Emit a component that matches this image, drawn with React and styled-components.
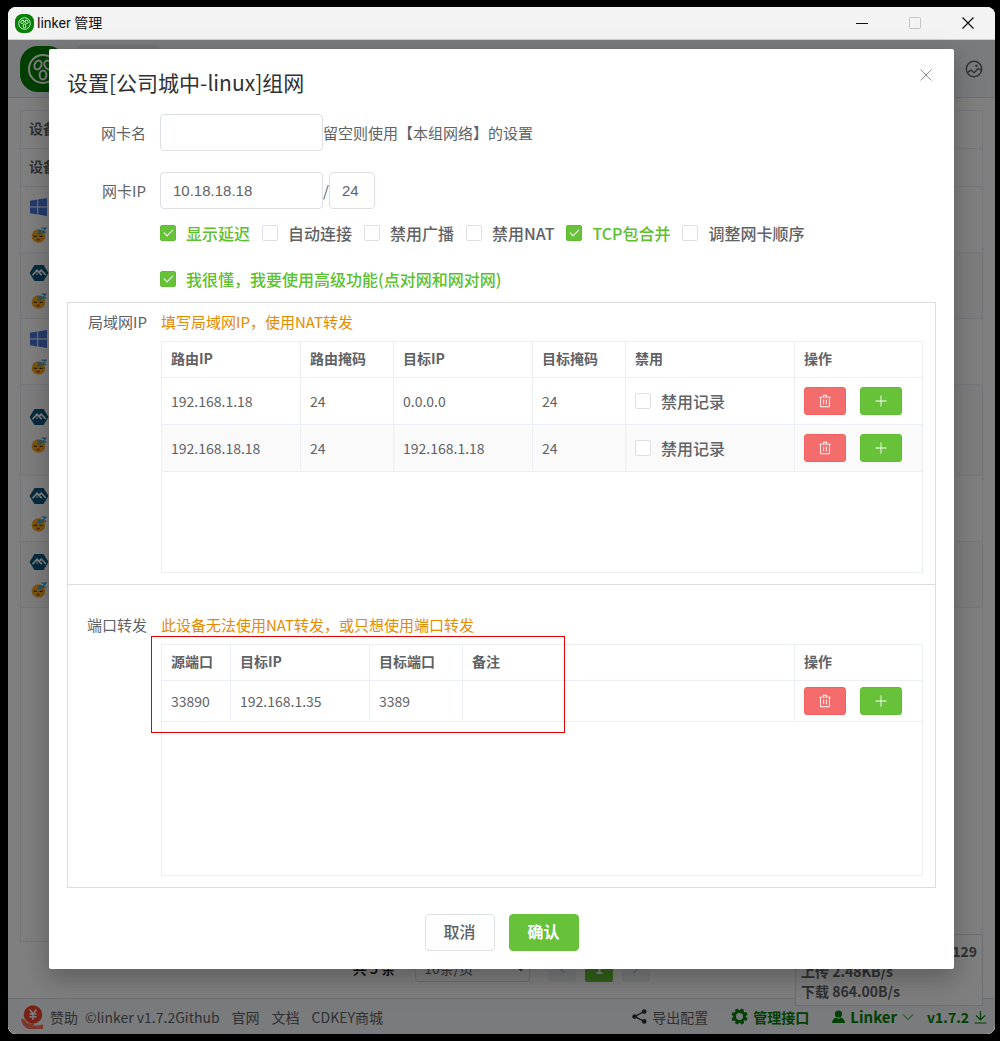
import React from "react";
import styled, { createGlobalStyle, css } from "styled-components";

const GlobalStyle = createGlobalStyle`
  *, *::before, *::after { box-sizing: border-box; }
  body {
    margin: 0;
    background: #000;
    color: #606266;
    font-family: "Noto Sans CJK SC", sans-serif;
    font-size: 14px;
    line-height: 20px;
  }
  button, input, select { font: inherit; color: inherit; margin: 0; }
`;

/* ---------- window frame ---------- */

const Desktop = styled.div`
  display: flex;
  min-height: 100vh;
  padding: 7px 5px 7px 8px;
`;

const AppWindow = styled.div`
  flex: 1;
  min-width: 0;
  display: flex;
  flex-direction: column;
  border-radius: 8px;
  overflow: hidden;
  background: #fff;
`;

const TitleBar = styled.header`
  display: flex;
  align-items: center;
  height: 33px;
  padding: 0 1px 0 7px;
  background: #f3f3f3;
  border-bottom: 1px solid #d0d0d0;
`;

const WindowTitle = styled.span`
  flex: 1;
  padding-left: 3px;
  color: #111;
  font-family: Roboto, "Noto Sans CJK SC", sans-serif;
`;

const WindowButton = styled.button`
  display: grid;
  place-items: center;
  width: 53px;
  height: 32px;
  padding: 0;
  border: 0;
  background: none;
  color: #111;
  &:disabled { color: #c4c4c4; }
`;

const Stage = styled.div`
  flex: 1;
  display: grid;
  grid-template-columns: minmax(0, 1fr);
  > * { grid-area: 1 / 1; }
`;

/* ---------- page behind the dialog ---------- */

const Page = styled.div`
  position: relative;
  display: flex;
  flex-direction: column;
  background: #fff;
`;

const PageHeader = styled.div`
  display: flex;
  align-items: center;
  gap: 12px;
  height: 58px;
  padding: 0 12px;
  background: #f5f7fa;
  border-bottom: 1px solid #dcdfe6;
`;

const NavTab = styled.a`
  align-self: stretch;
  width: 81px;
  margin: 5px auto 5px 0;
  border-radius: 4px;
  background: #e6e8eb;
`;

const IconButton = styled.button`
  display: grid;
  place-items: center;
  padding: 0;
  border: 0;
  background: none;
  color: #606266;
`;

const PageMain = styled.main`
  flex: 1;
  display: flex;
  flex-direction: column;
  gap: 12px;
  padding: 12px 12px 16px;
`;

const DeviceBox = styled.div`
  flex: 1;
  border: 1px solid #ebeef5;
`;

const DeviceTable = styled.table`
  width: 100%;
  border-spacing: 0;
  th, td { border-bottom: 1px solid #ebeef5; padding: 0 8px; text-align: left; }
  th { height: 38px; padding-bottom: 4px; color: #606266; font-weight: 700; }
`;

const DeviceRow = styled.tr`
  height: ${(p) => (p.$tall ? 91 : 66)}px;
  background: ${(p) => (p.$striped ? "#fafafa" : "#fff")};
`;

const DeviceIcons = styled.div`
  display: flex;
  flex-direction: column;
  align-items: center;
  gap: 10px;
  width: 20px;
`;

const Pager = styled.nav`
  display: flex;
  justify-content: center;
  align-items: center;
  gap: 9px;
  height: 28px;
`;

const PagerTotal = styled.span`
  margin-right: 11px;
  color: #000;
  font-weight: 500;
`;

const PagerSize = styled.select`
  width: 115px;
  height: 28px;
  margin-right: 9px;
  padding: 0 4px;
  border: 1px solid #dcdfe6;
  border-radius: 4px;
  background: #fff;
`;

const PagerButton = styled.button`
  display: grid;
  place-items: center;
  width: 28px;
  height: 28px;
  padding: 0;
  border: 0;
  border-radius: 2px;
  background: ${(p) => (p.$active ? "#67c23a" : "#f0f2f5")};
  color: ${(p) => (p.$active ? "#fff" : "#a8abb2")};
  font-weight: 700;
`;

const Traffic = styled.div`
  position: absolute;
  right: 12px;
  bottom: 28px;
  width: 188px;
  padding: 6px 5px 4px;
  border: 1px solid #dcdfe6;
  background: #fff;
  font-weight: 700;
  p { margin: 0; }
  p:first-child { text-align: right; }
`;

const PageFooter = styled.footer`
  display: flex;
  align-items: center;
  justify-content: space-between;
  height: 36px;
  padding: 0 8px 0 13px;
  background: #f5f7fa;
  border-top: 1px solid #dcdfe6;
`;

const FooterSide = styled.div`
  display: flex;
  align-items: center;
  gap: ${(p) => p.$gap}px;
`;

const FooterLink = styled.a`
  display: inline-flex;
  align-items: center;
  gap: ${(p) => p.$gap || 5}px;
  color: inherit;
  text-decoration: none;
  ${(p) =>
    p.$green &&
    css`
      color: #008000;
      font-size: ${p.$large ? 15 : 14}px;
      font-weight: 700;
    `}
`;

/* ---------- dialog ---------- */

const Overlay = styled.div`
  position: relative;
  padding: 9px 41px 65px;
  background: rgba(0, 0, 0, 0.5);
`;

const Dialog = styled.section`
  position: relative;
  padding: 18px;
  border-radius: 2px;
  background: #fff;
  box-shadow: 0 12px 32px 4px rgba(0, 0, 0, 0.1), 0 8px 20px rgba(0, 0, 0, 0.16);
`;

const DialogTitle = styled.h1`
  margin: 0 0 17px;
  color: #303133;
  font-size: 21px;
  font-weight: 400;
  line-height: 30px;
`;

const DialogClose = styled(IconButton)`
  position: absolute;
  top: 16px;
  right: 18px;
  width: 20px;
  height: 20px;
  color: #909399;
`;

const FormRow = styled.div`
  display: flex;
  align-items: center;
  margin-bottom: 21px;
  font-size: 15px;
`;

const RowLabel = styled.label`
  flex: none;
  width: 93px;
  padding-right: 14px;
  text-align: right;
  font-size: 15px;
  line-height: 22px;
`;

const TextInput = styled.input`
  width: ${(p) => (p.$short ? 46 : 163)}px;
  height: 37px;
  padding: 0 12px;
  border: 1px solid #dcdfe6;
  border-radius: 4px;
  background: #fff;
  font-family: "Liberation Sans", sans-serif;
  font-size: 15px;
`;

const Slash = styled.span`
  width: 6px;
`;

const Options = styled.div`
  display: flex;
  flex-direction: column;
  gap: 9px;
  margin: -16px 0 5px;
  padding-left: 93px;
`;

const OptionLine = styled.div`
  display: flex;
  align-items: center;
  gap: 12px;
  height: 37px;
`;

const CheckLabel = styled.label`
  display: inline-flex;
  align-items: center;
  gap: 10px;
  font-size: 16px;
  font-weight: 500;
  line-height: 24px;
  white-space: nowrap;
`;

const CheckBox = styled.input.attrs({ type: "checkbox" })`
  appearance: none;
  display: grid;
  place-content: center;
  width: 16px;
  height: 16px;
  border: 1px solid #dcdfe6;
  border-radius: 2px;
  background: #fff;
  &:checked {
    border-color: #5fbd32;
    background: #67c23a;
  }
  &:checked::after {
    content: "";
    width: 9px;
    height: 5px;
    margin-bottom: 3px;
    border: solid #fff;
    border-width: 0 0 1px 1px;
    transform: rotate(-45deg);
  }
  &:checked + span { color: #5dc02e; }
`;

const Group = styled.div`
  display: flex;
  padding: ${(p) => (p.$spaced ? "29px 12px 11px 0" : "8px 12px 11px 0")};
  border: 1px solid #ddd;
  & + & { border-top: 0; }
`;

const GroupBody = styled.div`
  flex: 1;
  min-width: 0;
`;

const Hint = styled.div`
  margin-bottom: 8px;
  color: #e68a00;
  font-size: 15px;
  line-height: 22px;
`;

const TableBox = styled.div`
  position: relative;
  min-height: 232px;
  border: 1px solid #ebeef5;
`;

const DataTable = styled.table`
  width: 100%;
  table-layout: fixed;
  border-spacing: 0;
  th, td {
    padding: 0 9px;
    border-right: 1px solid #ebeef5;
    border-bottom: 1px solid #ebeef5;
    text-align: left;
    white-space: nowrap;
  }
  th:last-child, td:last-child { border-right: 0; }
  th { height: 36px; padding-bottom: 3px; font-weight: 700; }
  td { height: ${(p) => p.$rowHeight}px; }
  tbody tr:nth-child(even) { background: #fafafa; }
`;

const Actions = styled.div`
  display: flex;
  gap: 14px;
`;

const ActionButton = styled.button`
  display: grid;
  place-items: center;
  width: 42px;
  height: 28px;
  padding: 0;
  border: 1px solid ${(p) => (p.$danger ? "#f56060" : "#5fbd32")};
  border-radius: 3px;
  background: ${(p) => (p.$danger ? "#f56c6c" : "#67c23a")};
  color: #fff;
`;

const Highlight = styled.div`
  position: absolute;
  top: -9px;
  left: -11px;
  width: 414px;
  height: 97px;
  border: 1px solid #e60000;
  pointer-events: none;
`;

const DialogFooter = styled.div`
  display: flex;
  justify-content: center;
  gap: 14px;
  margin-top: 26px;
`;

const DialogButton = styled.button`
  width: 70px;
  height: 37px;
  padding: 0 0 4px;
  border: 1px solid ${(p) => (p.$primary ? "#67c23a" : "#dcdfe6")};
  border-radius: 4px;
  background: ${(p) => (p.$primary ? "#67c23a" : "#fff")};
  color: ${(p) => (p.$primary ? "#fff" : "#606266")};
  font-size: 16px;
  font-weight: ${(p) => (p.$primary ? 700 : 500)};
`;

/* ---------- icons ---------- */

const Logo = ({ size }) => (
  <svg width={size} height={size} viewBox="0 0 46 46" aria-hidden="true">
    <rect width="46" height="46" rx="18" fill="#058005" />
    <g fill="none" stroke="#fff" strokeWidth="2">
      <circle cx="23" cy="23" r="14" />
      <ellipse cx="18" cy="19" rx="3.4" ry="4.6" transform="rotate(25 18 19)" />
      <ellipse cx="28" cy="19" rx="3.4" ry="4.6" transform="rotate(-25 28 19)" />
      <ellipse cx="23" cy="29" rx="3.4" ry="4.6" />
    </g>
  </svg>
);

const CrossIcon = ({ size, width = 1 }) => (
  <svg width={size} height={size} viewBox="0 0 12 12" fill="none" stroke="currentColor" strokeWidth={width} aria-hidden="true">
    <path d="M.5.5l11 11M11.5.5l-11 11" />
  </svg>
);

const PictureIcon = () => (
  <svg width="18" height="18" viewBox="0 0 18 18" fill="none" stroke="currentColor" strokeWidth="1.4" aria-hidden="true">
    <circle cx="9" cy="9" r="7.7" />
    <path d="M2.500 12.800L5 10.600c.7-.6 1.300-.5 1.900.1l1.200 1.200c.6.600 1.200.6 1.800 0L12.600 9c.6-.6 1.200-.6 1.800 0l2 1.800" />
    <circle cx="11.400" cy="5.800" r="1.200" fill="currentColor" stroke="none" />
  </svg>
);

const WindowsIcon = () => (
  <svg width="20" height="20" viewBox="0 0 20 20" fill="#4a78d8" aria-hidden="true">
    <path d="M1 3.800l7.300-1.200v6.900H1zM9.200 2.400L18 1v8.500H9.200zM1 10.500h7.300v6.900L1 16.200zM9.200 10.500H18V19l-8.800-1.400z" />
  </svg>
);

const AlpineIcon = () => (
  <svg width="20" height="20" viewBox="0 0 20 20" aria-hidden="true">
    <path d="M5.500 2h9L19.500 10l-5 8h-9L.5 10z" fill="#0d597f" />
    <path d="M3.500 12.200L8 7.300l4.800 4.900M10.300 9l2-1.800 4.600 4.800" fill="none" stroke="#fff" strokeWidth="1.700" />
    <path d="M8 9.500v2.500" stroke="#fff" strokeWidth="1" />
  </svg>
);

const SleepIcon = () => (
  <svg width="16" height="16" viewBox="0 0 16 16" fill="none" aria-hidden="true">
    <circle cx="7.500" cy="9" r="6.800" fill="#f7ab20" />
    <path d="M2.800 8.800c.8.900 2.200.9 3 0M8.600 8.800c.8.900 2.200.9 3 0" stroke="#5a3510" strokeWidth="1.100" />
    <ellipse cx="7.200" cy="12.600" rx="1.500" ry="1.200" fill="#b8322c" />
    <path d="M10.500 1.200h4.300l-3.600 4h4.200M6.800 3.800h2.900L7.300 6.500h3" stroke="#38a4d8" strokeWidth="1.300" />
  </svg>
);

const DeleteIcon = () => (
  <svg width="14" height="14" viewBox="0 0 1024 1024" fill="currentColor" aria-hidden="true">
    <path d="M160 256H96a32 32 0 0 1 0-64h256V95.936a32 32 0 0 1 32-32h256a32 32 0 0 1 32 32V192h256a32 32 0 1 1 0 64h-64v672a32 32 0 0 1-32 32H192a32 32 0 0 1-32-32zm448-64v-64H416v64zM224 896h576V256H224zm192-128a32 32 0 0 1-32-32V416a32 32 0 0 1 64 0v320a32 32 0 0 1-32 32m192 0a32 32 0 0 1-32-32V416a32 32 0 0 1 64 0v320a32 32 0 0 1-32 32" />
  </svg>
);

const PlusIcon = () => (
  <svg width="14" height="14" viewBox="0 0 1024 1024" fill="currentColor" aria-hidden="true">
    <path d="M480 480V128a32 32 0 0 1 64 0v352h352a32 32 0 1 1 0 64H544v352a32 32 0 1 1-64 0V544H128a32 32 0 0 1 0-64z" />
  </svg>
);

const SponsorIcon = () => (
  <svg width="22" height="24" viewBox="0 0 22 24" fill="none" aria-hidden="true">
    <circle cx="12" cy="9.500" r="9.200" fill="#f0442e" />
    <path d="M0 14c2-.6 3.400.5 4.600 2.200 1.800 2.300 4 2.600 7 2.300 2 0 2.200 1.600.4 2H9.500h8c1.500-.6 3-1.200 4.500-1V24H8.500C4 23.500 1 19.500 0 14z" fill="#f8705c" />
    <path d="M8.600 4.500l3.400 4.200 3.400-4.200M8.500 9h7M8.500 11.800h7M12 8.500v6.300" stroke="#fff" strokeWidth="1.500" />
  </svg>
);

const ShareIcon = () => (
  <svg width="15" height="15" viewBox="0 0 15 15" fill="#303133" stroke="#303133" strokeWidth="1.300" aria-hidden="true">
    <path d="M12 2.600L2.800 7.500l9.200 4.900" fill="none" />
    <circle cx="12.200" cy="2.600" r="1.700" />
    <circle cx="2.600" cy="7.500" r="1.700" />
    <circle cx="12.200" cy="12.400" r="1.700" />
  </svg>
);

const GearIcon = () => (
  <svg width="17" height="17" viewBox="0 0 18 18" fill="none" stroke="currentColor" aria-hidden="true">
    <circle cx="9" cy="9" r="5.200" strokeWidth="3" />
    {[0, 45, 90, 135, 180, 225, 270, 315].map((a) => (
      <path key={a} d="M9 .5v3" strokeWidth="3.600" transform={`rotate(${a + 22} 9 9)`} />
    ))}
  </svg>
);

const UserIcon = () => (
  <svg width="13" height="14" viewBox="0 0 13 14" fill="currentColor" aria-hidden="true">
    <circle cx="6.500" cy="4" r="3.600" />
    <path d="M4.300 7.500L6.500 9l2.200-1.500c2.800.9 4 2.500 4.300 5.500H0c.3-3 1.500-4.600 4.300-5.500z" />
  </svg>
);

const ChevronIcon = ({ direction = 0, size = 12 }) => (
  <svg width={size} height={size} viewBox="0 0 12 12" fill="none" stroke="currentColor" aria-hidden="true">
    <path d="M1 3.500l5 5 5-5" transform={`rotate(${direction} 6 6)`} />
  </svg>
);

const DownloadIcon = () => (
  <svg width="13" height="14" viewBox="0 0 13 14" fill="none" stroke="currentColor" strokeWidth="1.200" aria-hidden="true">
    <path d="M6.500 1v8.500M2 5.500l4.500 4.300L11 5.500M.5 13h12" />
  </svg>
);

/* ---------- data ---------- */

const devices = [
  { os: "windows" },
  { os: "alpine" },
  { os: "windows" },
  { os: "alpine", tall: true },
  { os: "alpine" },
  { os: "alpine" },
];

const options = [
  { label: "显示延迟", on: true },
  { label: "自动连接" },
  { label: "禁用广播" },
  { label: "禁用NAT" },
  { label: "TCP包合并", on: true },
  { label: "调整网卡顺序" },
];

const lanRows = [
  ["192.168.1.18", "24", "0.0.0.0", "24"],
  ["192.168.18.18", "24", "192.168.1.18", "24"],
];

const forwardRows = [["33890", "192.168.1.35", "3389", ""]];

const Check = ({ label, on }) => (
  <CheckLabel>
    <CheckBox defaultChecked={on} />
    <span>{label}</span>
  </CheckLabel>
);

const Columns = ({ widths }) => (
  <colgroup>
    {widths.map((w, i) => (
      <col key={i} width={w} />
    ))}
  </colgroup>
);

const HeadRow = ({ titles }) => (
  <thead>
    <tr>
      {titles.map((t) => (
        <th key={t} scope="col">{t}</th>
      ))}
    </tr>
  </thead>
);

const RowActions = () => (
  <Actions>
    <ActionButton type="button" $danger aria-label="删除"><DeleteIcon /></ActionButton>
    <ActionButton type="button" aria-label="添加"><PlusIcon /></ActionButton>
  </Actions>
);

const Background = () => (
  <Page>
    <PageHeader>
      <Logo size={46} />
      <NavTab href="#home" aria-label="首页" />
      <IconButton type="button" aria-label="背景图片"><PictureIcon /></IconButton>
    </PageHeader>
    <PageMain>
      <DeviceBox>
        <DeviceTable>
          <thead>
            <tr><th scope="col">设备</th></tr>
            <tr><th scope="col">设备</th></tr>
          </thead>
          <tbody>
            {devices.map((d, i) => (
              <DeviceRow key={i} $tall={d.tall} $striped={i % 2 === 1}>
                <td>
                  <DeviceIcons>
                    {d.os === "windows" ? <WindowsIcon /> : <AlpineIcon />}
                    <SleepIcon />
                  </DeviceIcons>
                </td>
              </DeviceRow>
            ))}
          </tbody>
        </DeviceTable>
      </DeviceBox>
      <Pager aria-label="分页">
        <PagerTotal>共 5 条</PagerTotal>
        <PagerSize aria-label="每页条数" defaultValue="10">
          <option value="10">10条/页</option>
        </PagerSize>
        <PagerButton type="button" aria-label="上一页"><ChevronIcon direction={90} /></PagerButton>
        <PagerButton type="button" $active>1</PagerButton>
        <PagerButton type="button" aria-label="下一页"><ChevronIcon direction={-90} /></PagerButton>
      </Pager>
    </PageMain>
    <PageFooter>
      <FooterSide $gap={7}>
        <FooterLink href="#sponsor" $gap={7}><SponsorIcon />赞助</FooterLink>
        <FooterSide $gap={12}>
          <FooterLink href="#github">©linker v1.7.2Github</FooterLink>
          <FooterLink href="#site">官网</FooterLink>
          <FooterLink href="#docs">文档</FooterLink>
          <FooterLink href="#cdkey">CDKEY商城</FooterLink>
        </FooterSide>
      </FooterSide>
      <FooterSide $gap={23}>
        <FooterLink href="#export"><ShareIcon />导出配置</FooterLink>
        <FooterLink href="#api" $green><GearIcon />管理接口</FooterLink>
        <FooterSide $gap={13}>
          <FooterLink href="#server" $green $large><UserIcon />Linker<ChevronIcon /></FooterLink>
          <FooterLink href="#update" $green>v1.7.2<DownloadIcon /></FooterLink>
        </FooterSide>
      </FooterSide>
    </PageFooter>
    <Traffic>
      <p>129</p>
      <p>上传 2.48KB/s</p>
      <p>下载 864.00B/s</p>
    </Traffic>
  </Page>
);

const NetworkDialog = () => (
  <Dialog role="dialog" aria-labelledby="dialog-title">
    <DialogTitle id="dialog-title">设置[公司城中-linux]组网</DialogTitle>
    <DialogClose type="button" aria-label="关闭"><CrossIcon size={12} /></DialogClose>

    <FormRow>
      <RowLabel htmlFor="nic-name">网卡名</RowLabel>
      <TextInput id="nic-name" />
      <span>留空则使用【本组网络】的设置</span>
    </FormRow>
    <FormRow>
      <RowLabel htmlFor="nic-ip">网卡IP</RowLabel>
      <TextInput id="nic-ip" defaultValue="10.18.18.18" />
      <Slash>/</Slash>
      <TextInput $short defaultValue="24" aria-label="掩码" />
    </FormRow>
    <Options>
      <OptionLine>
        {options.map((o) => (
          <Check key={o.label} {...o} />
        ))}
      </OptionLine>
      <OptionLine>
        <Check label="我很懂，我要使用高级功能(点对网和网对网)" on />
      </OptionLine>
    </Options>

    <Group>
      <RowLabel as="div">局域网IP</RowLabel>
      <GroupBody>
        <Hint>填写局域网IP，使用NAT转发</Hint>
        <TableBox>
          <DataTable $rowHeight={47}>
            <Columns widths={["139", "93", "139", "93", undefined, "127"]} />
            <HeadRow titles={["路由IP", "路由掩码", "目标IP", "目标掩码", "禁用", "操作"]} />
            <tbody>
              {lanRows.map((row, i) => (
                <tr key={i}>
                  {row.map((c, j) => <td key={j}>{c}</td>)}
                  <td><Check label="禁用记录" /></td>
                  <td><RowActions /></td>
                </tr>
              ))}
            </tbody>
          </DataTable>
        </TableBox>
      </GroupBody>
    </Group>
    <Group $spaced>
      <RowLabel as="div">端口转发</RowLabel>
      <GroupBody>
        <Hint>此设备无法使用NAT转发，或只想使用端口转发</Hint>
        <TableBox>
          <DataTable $rowHeight={41}>
            <Columns widths={["69", "139", "93", undefined, "127"]} />
            <HeadRow titles={["源端口", "目标IP", "目标端口", "备注", "操作"]} />
            <tbody>
              {forwardRows.map((row, i) => (
                <tr key={i}>
                  {row.map((c, j) => <td key={j}>{c}</td>)}
                  <td><RowActions /></td>
                </tr>
              ))}
            </tbody>
          </DataTable>
          <Highlight />
        </TableBox>
      </GroupBody>
    </Group>

    <DialogFooter>
      <DialogButton type="button">取消</DialogButton>
      <DialogButton type="button" $primary>确认</DialogButton>
    </DialogFooter>
  </Dialog>
);

export default function App() {
  return (
    <>
      <GlobalStyle />
      <Desktop>
        <AppWindow>
          <TitleBar>
            <Logo size={19} />
            <WindowTitle>linker 管理</WindowTitle>
            <WindowButton type="button" aria-label="最小化">
              <svg width="12" height="12" viewBox="0 0 12 12" aria-hidden="true">
                <path d="M0 6.500h12" stroke="currentColor" strokeWidth="1.200" />
              </svg>
            </WindowButton>
            <WindowButton type="button" aria-label="最大化" disabled>
              <svg width="12" height="12" viewBox="0 0 12 12" aria-hidden="true">
                <rect x=".5" y=".5" width="11" height="11" rx="1" fill="none" stroke="currentColor" />
              </svg>
            </WindowButton>
            <WindowButton type="button" aria-label="关闭窗口"><CrossIcon size={12} width={1.2} /></WindowButton>
          </TitleBar>
          <Stage>
            <Background />
            <Overlay>
              <NetworkDialog />
            </Overlay>
          </Stage>
        </AppWindow>
      </Desktop>
    </>
  );
}
